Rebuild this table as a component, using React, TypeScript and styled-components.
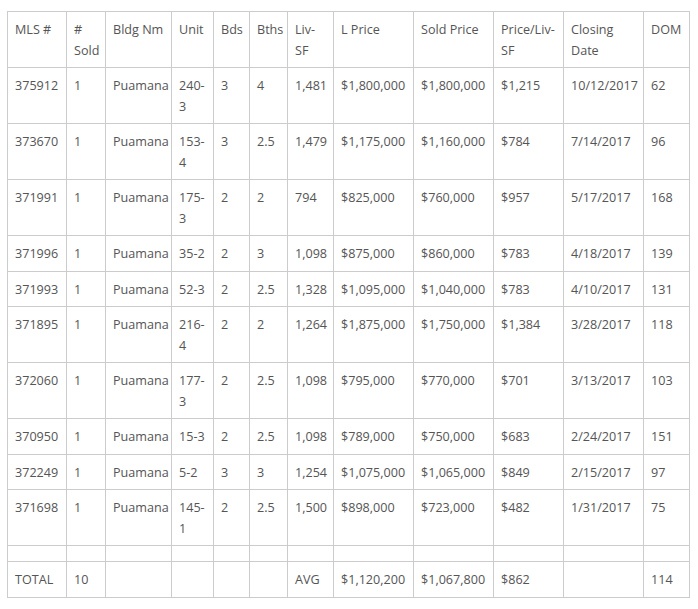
import React from "react";
import styled, { createGlobalStyle } from "styled-components";

const Global = createGlobalStyle`
  html, body { margin: 0; padding: 0; background: #fff; }
  body { padding: 11px 0 0 7px; }
`;

const Table = styled.table`
  border-collapse: collapse;
  table-layout: fixed;
  width: 682px;
  font-family: "Open Sans", "DejaVu Sans", sans-serif;
  font-size: 12.6px;
  line-height: 20.5px;
  color: #555;
`;

const Cell = styled.td`
  border: 1px solid #ccc;
  padding: 8px 7px 6px 7px;
  vertical-align: top;
  text-align: left;
  font-weight: normal;
`;

const HeadCell = styled(Cell).attrs({ as: "th" })``;

const SpacerRow = styled.tr`
  height: 16px;
  td { padding: 0; }
`;

const widths = [59, 39, 66, 42, 36, 38, 46, 80, 80, 70, 80, 46];
const headers = ["MLS #", "# Sold", "Bldg Nm", "Unit", "Bds", "Bths", "Liv-SF", "L Price", "Sold Price", "Price/Liv-SF", "Closing Date", "DOM"];

const rows: string[][] = [
  ["375912", "1", "Puamana", "240-3", "3", "4", "1,481", "$1,800,000", "$1,800,000", "$1,215", "10/12/2017", "62"],
  ["373670", "1", "Puamana", "153-4", "3", "2.5", "1,479", "$1,175,000", "$1,160,000", "$784", "7/14/2017", "96"],
  ["371991", "1", "Puamana", "175-3", "2", "2", "794", "$825,000", "$760,000", "$957", "5/17/2017", "168"],
  ["371996", "1", "Puamana", "35-2", "2", "3", "1,098", "$875,000", "$860,000", "$783", "4/18/2017", "139"],
  ["371993", "1", "Puamana", "52-3", "2", "2.5", "1,328", "$1,095,000", "$1,040,000", "$783", "4/10/2017", "131"],
  ["371895", "1", "Puamana", "216-4", "2", "2", "1,264", "$1,875,000", "$1,750,000", "$1,384", "3/28/2017", "118"],
  ["372060", "1", "Puamana", "177-3", "2", "2.5", "1,098", "$795,000", "$770,000", "$701", "3/13/2017", "103"],
  ["370950", "1", "Puamana", "15-3", "2", "2.5", "1,098", "$789,000", "$750,000", "$683", "2/24/2017", "151"],
  ["372249", "1", "Puamana", "5-2", "3", "3", "1,254", "$1,075,000", "$1,065,000", "$849", "2/15/2017", "97"],
  ["371698", "1", "Puamana", "145-1", "2", "2.5", "1,500", "$898,000", "$723,000", "$482", "1/31/2017", "75"],
];

const total = ["TOTAL", "10", "", "", "", "", "AVG", "$1,120,200", "$1,067,800", "$862", "", "114"];

export default function App() {
  return (
    <>
      <Global />
      <Table>
        <colgroup>
          {widths.map((w, i) => (
            <col key={i} style={{ width: w }} />
          ))}
        </colgroup>
        <thead>
          <tr>
            {headers.map((h) => (
              <HeadCell key={h}>{h}</HeadCell>
            ))}
          </tr>
        </thead>
        <tbody>
          {rows.map((r) => (
            <tr key={r[0]}>
              {r.map((c, i) => (
                <Cell key={i}>{c}</Cell>
              ))}
            </tr>
          ))}
          <SpacerRow>
            {widths.map((_, i) => (
              <Cell key={i} />
            ))}
          </SpacerRow>
          <tr>
            {total.map((c, i) => (
              <Cell key={i}>{c}</Cell>
            ))}
          </tr>
        </tbody>
      </Table>
    </>
  );
}
